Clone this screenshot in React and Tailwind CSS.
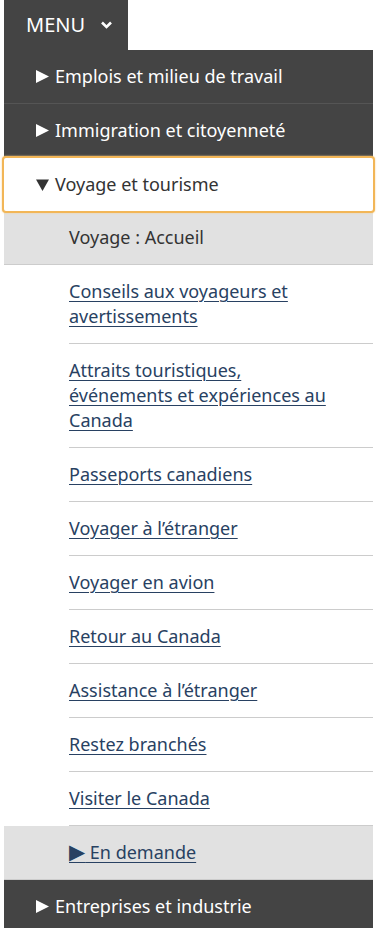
const subLinks = [
  'Conseils aux voyageurs et avertissements',
  'Attraits touristiques, événements et expériences au Canada',
  'Passeports canadiens',
  'Voyager à l’étranger',
  'Voyager en avion',
  'Retour au Canada',
  'Assistance à l’étranger',
  'Restez branchés',
  'Visiter le Canada',
];

function Arrow({ down = false }) {
  return down ? (
    <svg width="13" height="12" viewBox="0 0 13 12" className="shrink-0 mr-[6px]">
      <path d="M0 0.5h13L6.5 12z" fill="#333" />
    </svg>
  ) : (
    <svg width="13" height="13" viewBox="0 0 13 13" className="shrink-0 mr-[6px]">
      <path d="M0 0l13 6.5L0 13z" fill="#fff" />
    </svg>
  );
}

function DarkItem({ label }) {
  return (
    <li className="flex items-center bg-[#444] text-white border-b border-[#555] pl-[32px] pr-4 py-[14px] leading-[25px]">
      <Arrow />
      <span>{label}</span>
    </li>
  );
}

export default function App() {
  return (
    <div className="min-h-[928px] bg-white text-[18px]" style={{ fontFamily: '"Noto Sans", "DejaVu Sans", sans-serif' }}>
      <button
        type="button"
        className="ml-[4px] flex items-center h-[50px] w-[124px] pl-[22px] bg-[#444] text-white text-[20px]"
      >
        MENU
        <svg width="11" height="8" viewBox="0 0 11 8" className="ml-[16px]">
          <path d="M1 1.5l4.5 4.5L10 1.5" fill="none" stroke="#fff" strokeWidth="2.6" />
        </svg>
      </button>
      <ul className="mx-[4px]">
        <DarkItem label="Emplois et milieu de travail" />
        <DarkItem label="Immigration et citoyenneté" />
        <li className="relative z-10 flex items-center bg-white text-[#333] pl-[32px] pr-4 py-[14px] leading-[25px] rounded-[2px] shadow-[0_0_0_2px_#f2b657,0_0_2px_2px_#f6cf8c]">
          <Arrow down />
          <span>Voyage et tourisme</span>
        </li>
        <li className="bg-[#e1e1e1] text-[#333] border-b border-[#ccc] pl-[65px] pr-4 py-[14px] leading-[25px]">
          Voyage : Accueil
        </li>
        {subLinks.map((l) => (
          <li key={l} className="pl-[65px]">
            <div className="border-b border-[#ccc] py-[14px] pr-[40px] leading-[25px]">
              <a href="#" className="text-[#284162] underline underline-offset-[3px] decoration-1">
                {l}
              </a>
            </div>
          </li>
        ))}
        <li className="bg-[#e1e1e1] border-b border-[#ccc] pl-[65px] pr-4 py-[14px] leading-[25px]">
          <a href="#" className="text-[#284162] underline underline-offset-[3px] decoration-1">
            <span className="text-[21px] leading-none">▶</span> En demande
          </a>
        </li>
        <DarkItem label="Entreprises et industrie" />
      </ul>
    </div>
  );
}
